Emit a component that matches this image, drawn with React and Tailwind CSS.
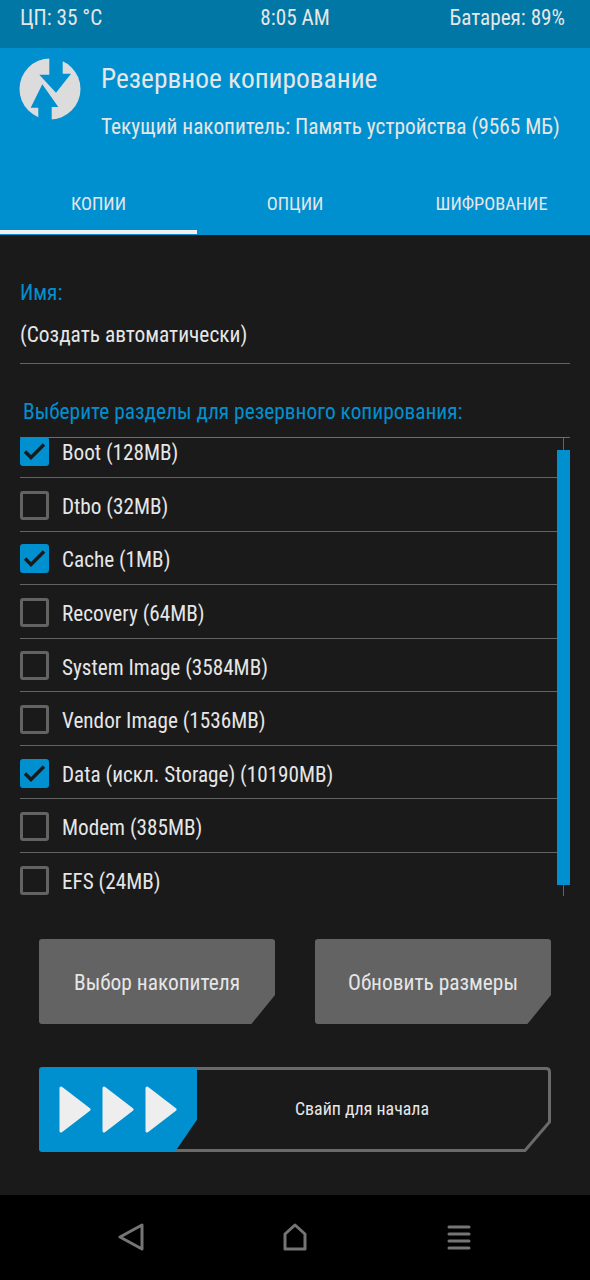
import React from 'react';

const PARTITIONS = [
  { label: 'Boot (128MB)', checked: true },
  { label: 'Dtbo (32MB)', checked: false },
  { label: 'Cache (1MB)', checked: true },
  { label: 'Recovery (64MB)', checked: false },
  { label: 'System Image (3584MB)', checked: false },
  { label: 'Vendor Image (1536MB)', checked: false },
  { label: 'Data (искл. Storage) (10190MB)', checked: true },
  { label: 'Modem (385MB)', checked: false },
  { label: 'EFS (24MB)', checked: false },
];

const Logo = () => (
  <svg width="62" height="62" viewBox="0 0 62 62" className="shrink-0">
    <circle cx="31" cy="31" r="30.5" fill="#dcdcdc" />
    <path d="M30.300 -1H43.700V15.700H52L37 34.700L20.300 16.700H30.300Z" fill="#0090d0" />
    <path d="M23.300 26.300L39.300 49H32.700V62.700H19.300V49.700H11.700Z" fill="#0090d0" />
  </svg>
);

const Checkbox = ({ checked }) =>
  checked ? (
    <div className="w-[29px] h-[29px] rounded-[3px] bg-[#0090d0] flex items-center justify-center shrink-0">
      <svg width="23" height="19" viewBox="0 0 23 19" fill="none" stroke="#1a1a1a" strokeWidth="3.5">
        <path d="M2 9.500L8 15.500L21 2.500" />
      </svg>
    </div>
  ) : (
    <div className="w-[29px] h-[29px] rounded-[3px] border-[3px] border-[#636363] shrink-0" />
  );

const CutButton = ({ children }) => (
  <button className="w-[236px] h-[85px] pt-[3px] bg-[#636363] rounded-[3px] [clip-path:polygon(0_0,100%_0,100%_66%,90%_100%,0_100%)] text-[#e6e6e6] text-[21.4px]">
    {children}
  </button>
);

const App = () => (
  <div className="w-[590px] h-[1280px] flex flex-col bg-[#1a1a1a] text-[#e6e6e6] overflow-hidden font-['Roboto',sans-serif] [font-stretch:75%]">
    <div className="h-[48px] bg-[#0077a5] px-[20px] flex items-start justify-between pt-[2px] text-[21.2px]">
      <span className="w-[160px]">ЦП: 35 °C</span>
      <span>8:05 AM</span>
      <span className="w-[160px] text-right pr-[5px]">Батарея: 89%</span>
    </div>

    <div className="h-[187px] bg-[#0090d0] flex flex-col">
      <div className="flex pl-[19px] pt-[10px] gap-[20px] h-[135px]">
        <Logo />
        <div className="flex flex-col -mt-[1px]">
          <span className="text-[27.4px] leading-[44px]">Резервное копирование</span>
          <span className="text-[21.35px] leading-[30px] mt-[11px]">Текущий накопитель: Память устройства (9565 МБ)</span>
        </div>
      </div>
      <div className="flex h-[52px] text-[18.3px]">
        <div className="w-[197px] flex items-start justify-center pt-[7px] border-b-[4px] border-[#f0f0f0] h-[51px]">КОПИИ</div>
        <div className="w-[196px] flex items-start justify-center pt-[7px]">ОПЦИИ</div>
        <div className="w-[197px] flex items-start justify-center pt-[7px]">ШИФРОВАНИЕ</div>
      </div>
    </div>

    <div className="flex-1 px-[20px] flex flex-col">
      <div className="text-[#0090d0] text-[21.4px] mt-[44px] leading-[28px]">Имя:</div>
      <div className="text-[21.4px] mt-[13px] leading-[30px] pb-[13px] border-b border-[#636363]">(Создать автоматически)</div>
      <div className="text-[#0090d0] text-[21.4px] mt-[34px] leading-[28px] pl-[3px]">Выберите разделы для резервного копирования:</div>

      <div className="relative mt-[11px] h-[459px] border-t border-[#0090d0] overflow-hidden">
        <div className="absolute right-[6px] top-0 bottom-0 w-px bg-[#636363]" />
        <div className="absolute right-0 top-[12px] w-[13px] h-[435px] bg-[#0090d0]" />
        <div className="flex flex-col pr-[13px]">
          {PARTITIONS.map((p, i) => (
            <div
              key={p.label}
              className={`flex items-center gap-[13px] text-[21.2px] h-[53.6px] pt-[2px] shrink-0 ${i < PARTITIONS.length - 1 ? 'border-b border-[#636363]' : ''} ${i === 0 ? '-mt-[13.7px]' : ''}`}
            >
              <Checkbox checked={p.checked} />
              <span className="pt-[3px]">{p.label}</span>
            </div>
          ))}
        </div>
      </div>

      <div className="flex justify-between px-[19px] mt-[43px]">
        <CutButton>Выбор накопителя</CutButton>
        <CutButton>Обновить размеры</CutButton>
      </div>

      <div className="relative mx-[19px] mt-[43px] h-[85px]">
        <svg className="absolute inset-0" width="512" height="85" viewBox="0 0 512 85" fill="none">
          <path d="M100 1.500H507Q510.500 1.500 510.500 5V55L486 83.500H100" stroke="#6a6a6a" strokeWidth="3" />
        </svg>
        <div className="absolute left-0 top-0 w-[158px] h-[85px] rounded-[3px] bg-[#0090d0] [clip-path:polygon(0_0,100%_0,100%_62%,86%_100%,0_100%)] flex items-center pl-[20px] gap-[11px]">
          {[0, 1, 2].map((i) => (
            <svg key={i} width="32" height="49" viewBox="0 0 32 49">
              <path d="M2 3L30 24.500L2 46Z" fill="#eeeeee" stroke="#eeeeee" strokeWidth="3" strokeLinejoin="round" />
            </svg>
          ))}
        </div>
        <div className="absolute left-[158px] right-0 top-0 h-[85px] flex items-center justify-center text-[17.9px] pr-[24px]">Свайп для начала</div>
      </div>
    </div>

    <div className="h-[85px] bg-black flex items-center justify-center gap-[138px] pb-[1px]">
      <svg width="26" height="28" viewBox="0 0 26 28" fill="none" stroke="#757575" strokeWidth="3" strokeLinejoin="round">
        <path d="M24 2V26L2 14Z" />
      </svg>
      <svg width="26" height="28" viewBox="0 0 26 28" fill="none" stroke="#757575" strokeWidth="3" strokeLinejoin="round">
        <path d="M3 11L13 2L23 11V26H3Z" />
      </svg>
      <svg width="26" height="26" viewBox="0 0 26 26" fill="none" stroke="#757575" strokeWidth="3" strokeLinecap="round">
        <path d="M3 3H23M3 10H23M3 17H23M3 24H23" />
      </svg>
    </div>
  </div>
);

export default App;
